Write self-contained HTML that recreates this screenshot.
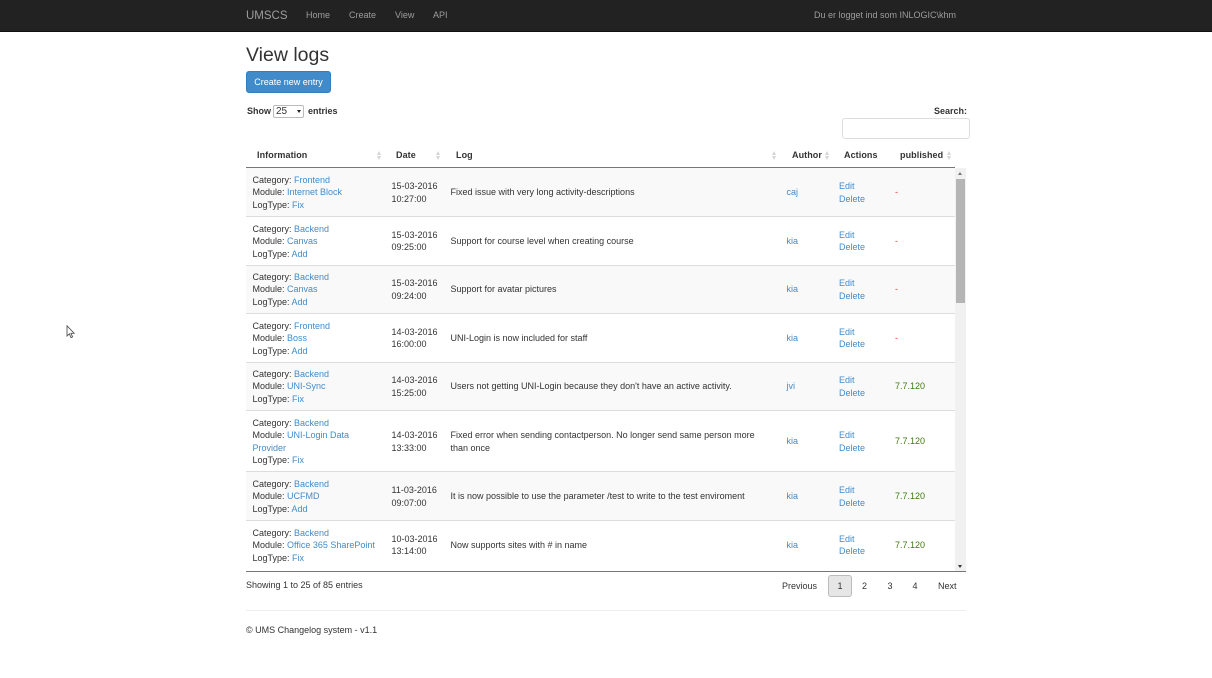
<!DOCTYPE html>
<html><head><meta charset="utf-8"><style>
html,body{margin:0;padding:0;width:1212px;height:678px;overflow:hidden;background:#fff}
body{font-family:"Liberation Sans",sans-serif;font-size:9px;color:#333;position:relative;filter:blur(.3px)}
.a{position:absolute;white-space:nowrap}
a,.l{color:#428bca}
.c{position:absolute;white-space:nowrap;line-height:12.6px}
.row{position:absolute;left:246px;width:709px;border-bottom:1px solid #ddd;box-sizing:border-box}
.odd{background:#f9f9f9}
.nav{color:#9d9d9d}
.th{font-weight:bold;letter-spacing:.08px;top:148.5px;line-height:12px;color:#333}
.s{position:absolute;width:5px;height:9px}
.s:before,.s:after{content:"";position:absolute;left:0;border-left:2.5px solid transparent;border-right:2.5px solid transparent}
.s:before{top:0;border-bottom:4px solid #d6d6d6}
.s:after{top:5px;border-top:4px solid #d6d6d6}
</style></head><body>
<div class="a" style="left:0;top:0;width:1212px;height:32px;background:#222;border-bottom:1px solid #111;box-sizing:border-box"></div>
<div class="a nav" style="left:246px;top:9px;font-size:11.5px;line-height:15px">UMSCS</div>
<div class="a nav" style="left:306px;top:9px;line-height:13px">Home</div>
<div class="a nav" style="left:349px;top:9px;line-height:13px">Create</div>
<div class="a nav" style="left:395px;top:9px;line-height:13px">View</div>
<div class="a nav" style="left:433px;top:9px;line-height:13px">API</div>
<div class="a nav" style="left:814px;top:9px;line-height:13px">Du er logget ind som INLOGIC\khm</div>

<div class="a" style="left:246px;top:43px;font-size:19.5px;line-height:25px;color:#333">View logs</div>
<div class="a" style="left:246px;top:71px;width:85px;height:22px;background:#428bca;border:1px solid #357ebd;border-radius:3px;box-sizing:border-box;color:#fff;text-align:center;line-height:20px">Create new entry</div>

<div class="a" style="left:247px;top:105px;font-weight:bold;line-height:13px">Show</div>
<div class="a" style="left:273px;top:105px;width:31px;height:13px;border:1px solid #bbb;border-radius:2px;box-sizing:border-box;background:#fff;line-height:11px;padding-left:2px;font-size:10px">25<span style="position:absolute;left:23px;top:4px;border-left:2px solid transparent;border-right:2px solid transparent;border-top:3px solid #222"></span></div>
<div class="a" style="left:308px;top:105px;font-weight:bold;line-height:13px">entries</div>
<div class="a" style="left:934px;top:105px;font-weight:bold;line-height:13px">Search:</div>
<div class="a" style="left:842px;top:118px;width:128px;height:21px;border:1px solid #ddd;border-radius:3px;box-sizing:border-box;background:#fff"></div>

<div class="a th" style="left:257px">Information</div><div class="s" style="left:377px;top:151px"></div>
<div class="a th" style="left:396px">Date</div><div class="s" style="left:436px;top:151px"></div>
<div class="a th" style="left:456px">Log</div><div class="s" style="left:772px;top:151px"></div>
<div class="a th" style="left:792px">Author</div><div class="s" style="left:825px;top:151px"></div>
<div class="a th" style="left:844px">Actions</div>
<div class="a th" style="left:900px">published</div><div class="s" style="left:947px;top:151px"></div>
<div class="a" style="left:246px;top:167px;width:709px;height:1px;background:#777"></div>

<div class="row odd" style="top:168px;height:49px"></div>
<div class="row" style="top:217px;height:49px"></div>
<div class="row odd" style="top:266px;height:48px"></div>
<div class="row" style="top:314px;height:49px"></div>
<div class="row odd" style="top:363px;height:48px"></div>
<div class="row" style="top:411px;height:61px"></div>
<div class="row odd" style="top:472px;height:49px"></div>
<div class="row" style="top:521px;height:48px;border-bottom:0"></div>

<div class="c" style="left:252.5px;top:173.5px">Category: <a>Frontend</a><br>Module: <a>Internet Block</a><br>LogType: <a>Fix</a></div>
<div class="c" style="left:391.5px;top:180px">15-03-2016<br>10:27:00</div>
<div class="c" style="left:450.5px;top:186px">Fixed issue with very long activity-descriptions</div>
<div class="c l" style="left:786.5px;top:186px">caj</div>
<div class="c l" style="left:839px;top:180px">Edit<br>Delete</div>
<div class="c" style="left:895px;top:186px;color:#e33">-</div>

<div class="c" style="left:252.5px;top:222.5px">Category: <a>Backend</a><br>Module: <a>Canvas</a><br>LogType: <a>Add</a></div>
<div class="c" style="left:391.5px;top:228.5px">15-03-2016<br>09:25:00</div>
<div class="c" style="left:450.5px;top:234.5px">Support for course level when creating course</div>
<div class="c l" style="left:786.5px;top:234.5px">kia</div>
<div class="c l" style="left:839px;top:228.5px">Edit<br>Delete</div>
<div class="c" style="left:895px;top:234.5px;color:#e33">-</div>

<div class="c" style="left:252.5px;top:270.5px">Category: <a>Backend</a><br>Module: <a>Canvas</a><br>LogType: <a>Add</a></div>
<div class="c" style="left:391.5px;top:277px">15-03-2016<br>09:24:00</div>
<div class="c" style="left:450.5px;top:283px">Support for avatar pictures</div>
<div class="c l" style="left:786.5px;top:283px">kia</div>
<div class="c l" style="left:839px;top:277px">Edit<br>Delete</div>
<div class="c" style="left:895px;top:283px;color:#e33">-</div>

<div class="c" style="left:252.5px;top:319.5px">Category: <a>Frontend</a><br>Module: <a>Boss</a><br>LogType: <a>Add</a></div>
<div class="c" style="left:391.5px;top:325.5px">14-03-2016<br>16:00:00</div>
<div class="c" style="left:450.5px;top:331.5px">UNI-Login is now included for staff</div>
<div class="c l" style="left:786.5px;top:331.5px">kia</div>
<div class="c l" style="left:839px;top:325.5px">Edit<br>Delete</div>
<div class="c" style="left:895px;top:331.5px;color:#e33">-</div>

<div class="c" style="left:252.5px;top:367.5px">Category: <a>Backend</a><br>Module: <a>UNI-Sync</a><br>LogType: <a>Fix</a></div>
<div class="c" style="left:391.5px;top:374px">14-03-2016<br>15:25:00</div>
<div class="c" style="left:450.5px;top:380px">Users not getting UNI-Login because they don't have an active activity.</div>
<div class="c l" style="left:786.5px;top:380px">jvi</div>
<div class="c l" style="left:839px;top:374px">Edit<br>Delete</div>
<div class="c" style="left:895px;top:380px;color:#3c7a10">7.7.120</div>

<div class="c" style="left:252.5px;top:416.5px">Category: <a>Backend</a><br>Module: <a>UNI-Login Data</a><br><a>Provider</a><br>LogType: <a>Fix</a></div>
<div class="c" style="left:391.5px;top:429px">14-03-2016<br>13:33:00</div>
<div class="c" style="left:450.5px;top:429px">Fixed error when sending contactperson. No longer send same person more<br>than once</div>
<div class="c l" style="left:786.5px;top:435px">kia</div>
<div class="c l" style="left:839px;top:429px">Edit<br>Delete</div>
<div class="c" style="left:895px;top:435px;color:#3c7a10">7.7.120</div>

<div class="c" style="left:252.5px;top:477.5px">Category: <a>Backend</a><br>Module: <a>UCFMD</a><br>LogType: <a>Add</a></div>
<div class="c" style="left:391.5px;top:484px">11-03-2016<br>09:07:00</div>
<div class="c" style="left:450.5px;top:490px">It is now possible to use the parameter /test to write to the test enviroment</div>
<div class="c l" style="left:786.5px;top:490px">kia</div>
<div class="c l" style="left:839px;top:484px">Edit<br>Delete</div>
<div class="c" style="left:895px;top:490px;color:#3c7a10">7.7.120</div>

<div class="c" style="left:252.5px;top:526.5px">Category: <a>Backend</a><br>Module: <a>Office 365 SharePoint</a><br>LogType: <a>Fix</a></div>
<div class="c" style="left:391.5px;top:532.5px">10-03-2016<br>13:14:00</div>
<div class="c" style="left:450.5px;top:538.5px">Now supports sites with # in name</div>
<div class="c l" style="left:786.5px;top:538.5px">kia</div>
<div class="c l" style="left:839px;top:532.5px">Edit<br>Delete</div>
<div class="c" style="left:895px;top:538.5px;color:#3c7a10">7.7.120</div>

<div class="a" style="left:955px;top:168px;width:11px;height:403px;background:#f1f1f1"></div>
<div class="a" style="left:956px;top:179px;width:9px;height:124px;background:#b5b5b5"></div>
<div class="a" style="left:958px;top:172px;border-left:2.5px solid transparent;border-right:2.5px solid transparent;border-bottom:3px solid #777"></div>
<div class="a" style="left:958px;top:565px;border-left:2.5px solid transparent;border-right:2.5px solid transparent;border-top:3px solid #333"></div>
<div class="a" style="left:246px;top:571px;width:720px;height:1px;background:#777"></div>

<div class="a" style="left:246px;top:579px;line-height:13px">Showing 1 to 25 of 85 entries</div>
<div class="a" style="left:782px;top:579.5px;line-height:13px">Previous</div>
<div class="a" style="left:828px;top:575px;width:24px;height:22px;background:#e6e6e6;border:1px solid #bbb;border-radius:3px;box-sizing:border-box;text-align:center;line-height:20px">1</div>
<div class="a" style="left:862px;top:579.5px;line-height:13px">2</div>
<div class="a" style="left:887.5px;top:579.5px;line-height:13px">3</div>
<div class="a" style="left:912.5px;top:579.5px;line-height:13px">4</div>
<div class="a" style="left:938px;top:579.5px;line-height:13px">Next</div>

<div class="a" style="left:246px;top:610px;width:720px;height:1px;background:#eee"></div>
<div class="a" style="left:246px;top:624px;line-height:13px">© UMS Changelog system - v1.1</div>

<svg class="a" style="left:66px;top:325px" width="9" height="14" viewBox="0 0 9 14"><path d="M1 .8V11l2.4-2.2L5 12.6l1.6-.7-1.6-3.6h3.2z" fill="#fff" stroke="#555" stroke-width=".9"/></svg>
</body></html>
